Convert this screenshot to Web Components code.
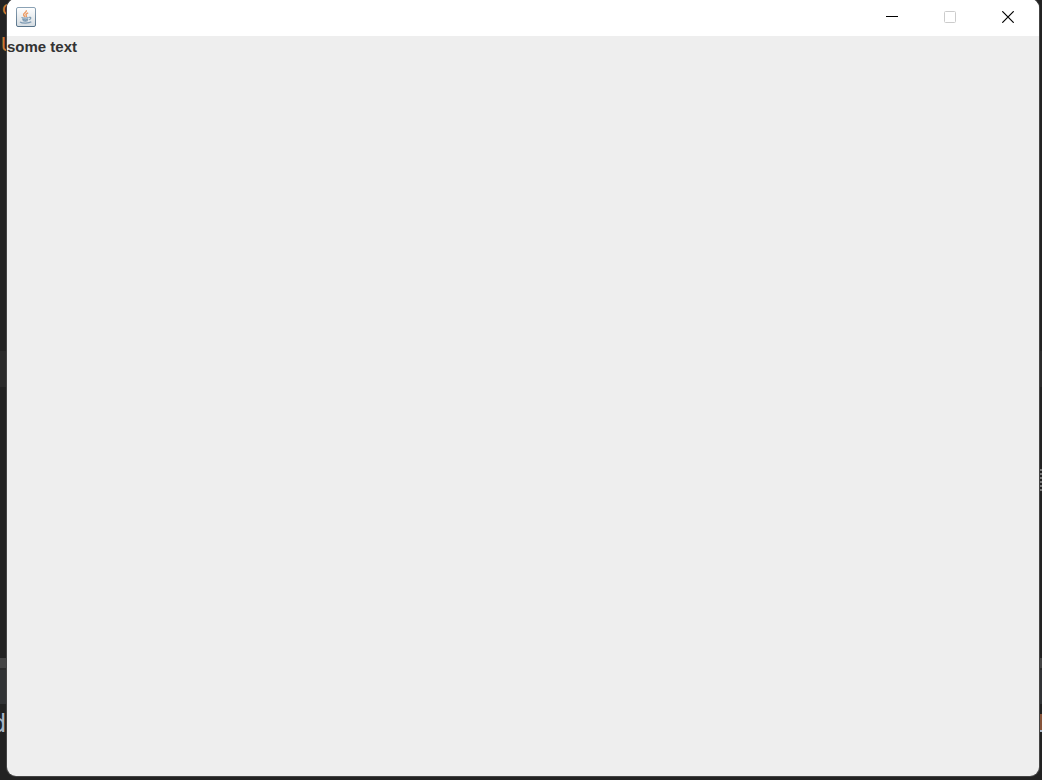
<!DOCTYPE html>
<html lang="en">
<head>
<meta charset="utf-8">
<meta name="viewport" content="width=device-width, initial-scale=1">
<title>Desktop</title>
<style>
html, body {
	height: 100%;
	margin: 0;
}
body {
	background-color: #222;
	overflow: hidden;
}
</style>
</head>
<body>
<desktop-area>
	<editor-backdrop slot="backdrop"></editor-backdrop>
	<app-window>
		<java-icon slot="icon"></java-icon>
		<swing-label>some text</swing-label>
	</app-window>
</desktop-area>

<script>
const desktopTemplate = document.createElement("template");
desktopTemplate.innerHTML =
`<style>
:host {
	display: grid;
	grid-template: minmax(0, 1fr) / minmax(0, 1fr);
	height: 100%;
}
::slotted(*) {
	grid-area: 1 / 1;
}
</style>
<slot name="backdrop"></slot>
<slot></slot>
`

// The code editor that shows around the edges of the window
const backdropTemplate = document.createElement("template");
backdropTemplate.innerHTML =
`<style>
:host {
	display: flex;
	flex-flow: column;
	overflow: hidden;
	font: 20px/36px "DejaVu Sans Mono", monospace;
	color: #a9b7c6;
}
.code {
	flex: 1 1 auto;
	min-height: 0;
	background-color: #232323;
}
.keyword {
	color: #cc7832;
	padding-left: 1px;
	height: 36px;
}
.keyword:first-child {
	margin-top: -10px;
}
.current {
	flex: 0 0 36px;
	background-color: #2b2b2b;
}
.middle {
	flex: 0 0 271px;
	display: flex;
	justify-content: flex-end;
	background-color: #222;
}
.lines {
	width: 3px;
	height: 22px;
	margin-top: 82px;
	background: repeating-linear-gradient(#777 0 2px, #222 2px 4px);
}
.divider {
	flex: 0 0 10px;
	background-color: #444;
}
.toolbar {
	flex: 0 0 36px;
	box-sizing: border-box;
	border-top: 2px solid #2b2b2b;
	background-color: #313335;
}
.console {
	flex: 0 0 76px;
	display: flex;
	justify-content: space-between;
	background-color: #222;
	font-size: 24px;
	line-height: 40px;
}
.console span {
	margin-left: -8px;
}
.edge {
	width: 3px;
	height: 18px;
	margin-top: 10px;
	box-sizing: border-box;
	border: solid #a9b7c6;
	border-width: 0 0 2px;
	background-color: #86543a;
}
</style>
<div class="code">
	<div class="keyword">c</div>
	<div class="keyword">U</div>
</div>
<div class="current"></div>
<div class="middle"><div class="lines"></div></div>
<div class="divider"></div>
<div class="toolbar"></div>
<div class="console"><span>d</span><div class="edge"></div></div>
`

const windowTemplate = document.createElement("template");
windowTemplate.innerHTML =
`<style>
:host {
	display: flex;
	flex-flow: column;
	margin: -1px 3px 4px 7px;
	border-radius: 9px;
	overflow: hidden;
	background-color: #eee;
	box-shadow: 0 0 0 1px #444;
}
.titlebar {
	flex: 0 0 37px;
	box-sizing: border-box;
	display: flex;
	align-items: center;
	padding: 0 2px 2px 9px;
	background-color: #fff;
}
.icon {
	flex: 1 1 auto;
	display: flex;
}
button {
	display: grid;
	place-items: center;
	width: 58px;
	height: 35px;
	padding: 0;
	border: 0;
	background: none;
	color: #000;
}
button:disabled {
	color: #ccc;
}
button:not(:disabled):hover {
	background-color: #e5e5e5;
}
svg {
	display: block;
}
.content {
	flex: 1 1 auto;
	min-height: 0;
}
</style>
<div class="titlebar">
	<div class="icon"><slot name="icon"></slot></div>
	<button type="button" aria-label="Minimize">
		<svg width="12" height="12" viewBox="0 0 12 12"><path d="M0 5h12v1H0z" fill="currentColor"/></svg>
	</button>
	<button type="button" aria-label="Maximize" disabled>
		<svg width="12" height="12" viewBox="0 0 12 12" fill="none" stroke="currentColor"><rect x=".5" y=".5" width="11" height="11" rx="1"/></svg>
	</button>
	<button type="button" aria-label="Close">
		<svg width="12" height="12" viewBox="0 0 12 12" fill="none" stroke="currentColor" stroke-width="1.2"><path d="M.3.3l11.4 11.4M11.7.3L.3 11.7"/></svg>
	</button>
</div>
<div class="content"><slot></slot></div>
`

const javaIconTemplate = document.createElement("template");
javaIconTemplate.innerHTML =
`<style>
:host {
	display: block;
}
svg {
	display: block;
}
</style>
<svg width="20" height="20" viewBox="0 0 20 20" fill="none" aria-hidden="true">
	<defs>
		<linearGradient id="face" x1="0" y1="0" x2="0" y2="1"><stop offset="0" stop-color="#fff"/><stop offset="1" stop-color="#d5dce1"/></linearGradient>
		<linearGradient id="rim" x1="0" y1="0" x2="0" y2="1"><stop offset="0" stop-color="#8ba2b5"/><stop offset="1" stop-color="#58738a"/></linearGradient>
	</defs>
	<rect x=".5" y=".5" width="19" height="19" rx="1.5" fill="url(#face)" stroke="url(#rim)"/>
	<path d="M10.3 3.300c.8 2-3.300 2.900-2.700 4.700.2.800 1.100 1.200 1.300 2.100M12.200 5.900c-2.300.9-2.700 1.800-1.900 2.700.4.500.2.900-.2 1.300" stroke="#ec9a62" stroke-width="1.400"/>
	<path d="M5.500 10.500c1.500.6 5.500.6 7.100 0M6.200 12c1.600.8 4.700.8 6 0M6.700 13.500c1.400.6 3.900.6 5.100 0M13 10.400c2.400-.7 2.400 1.500.2 2.300M4 15c1.900 1.500 9.300 1.500 11.300-.2" stroke="#7d9ab3" stroke-width="1.200"/>
</svg>
`

const labelTemplate = document.createElement("template");
labelTemplate.innerHTML =
`<style>
:host {
	display: block;
	font: bold 15px/22px "Liberation Sans", Arial, sans-serif;
	color: #333;
}
</style>
<slot></slot>
`

const define = (name, template) => customElements.define(name, class extends HTMLElement {
	constructor() {
		super();

		this.attachShadow({mode: 'open'})
			.appendChild(template.content.cloneNode(true));
	}
});

define('desktop-area', desktopTemplate);
define('editor-backdrop', backdropTemplate);
define('app-window', windowTemplate);
define('java-icon', javaIconTemplate);
define('swing-label', labelTemplate);
</script>
</body>
</html>
